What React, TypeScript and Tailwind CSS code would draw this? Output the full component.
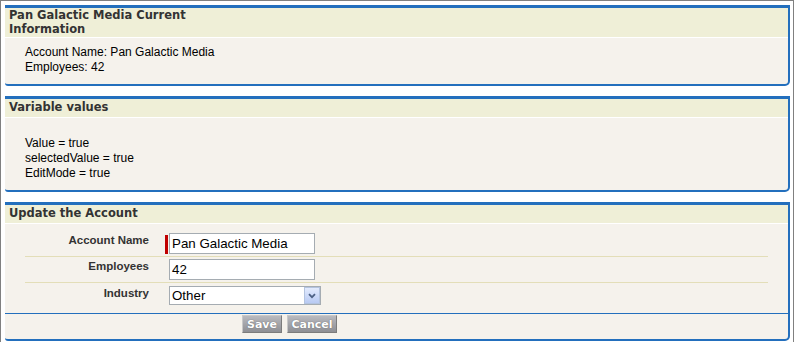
import React from "react";

const verdana = { fontFamily: '"DejaVu Sans", Verdana, sans-serif' };

function PanelHeader({ title, tall }: { title: string; tall?: boolean }) {
  return (
    <div
      className={`bg-[#EFEFD7] border-b border-white flex items-center pl-[4px] ${tall ? "h-[30px]" : "h-[19px]"}`}
    >
      <div
        className="w-[215px] text-[11.5px] font-bold text-[#333333] leading-[13.5px]"
        style={verdana}
      >
        {title}
      </div>
    </div>
  );
}

function Panel({ children }: { children: React.ReactNode }) {
  return (
    <div className="border-t-[3px] border-r-2 border-b-2 border-l-0 border-[#236FBD] rounded-br-[5px] rounded-bl-[3px] bg-[#F5F2EC] overflow-hidden">
      {children}
    </div>
  );
}

function Row({
  label,
  required,
  border,
  children,
  pt = "pt-[2px]",
  pb = "pb-[2px]",
}: {
  label: string;
  required?: boolean;
  border?: boolean;
  children: React.ReactNode;
  pt?: string;
  pb?: string;
}) {
  return (
    <div className={`flex ${pt} ${pb} ${border ? "border-b border-[#E3DEB8]" : ""}`}>
      <div className="w-[137px] pr-[13px] text-right pt-[1px] text-[11.5px] leading-[13px] font-bold text-[#333333]">
        {label}
      </div>
      <div className="flex items-start pl-[3px]">
        <div className={`w-[3px] h-[19px] mt-[2px] ${required ? "bg-[#C00000]" : ""}`} />
        <div className="ml-[1px]">{children}</div>
      </div>
    </div>
  );
}

function TextBox({ value }: { value: string }) {
  return (
    <div className="w-[146px] h-[21px] border border-[#A5ACB2] bg-white pl-[2px] flex items-center text-[13.33px] text-black leading-none">
      {value}
    </div>
  );
}

function SelectBox({ value }: { value: string }) {
  return (
    <div className="w-[152px] h-[19px] border border-[#A5ACB2] bg-white flex items-center text-[13.33px] text-black leading-none">
      <div className="flex-1 pl-[2px]">{value}</div>
      <div className="w-[16px] h-[17px] border border-[#B3C3DF] bg-gradient-to-b from-[#E3EBFD] to-[#B8CAF3] flex items-center justify-center">
        <svg width="8" height="6" viewBox="0 0 8 6">
          <path d="M1 1.2 L4 4.2 L7 1.2" fill="none" stroke="#4D6185" strokeWidth="1.8" />
        </svg>
      </div>
    </div>
  );
}

function Btn({ label, w }: { label: string; w: string }) {
  return (
    <div
      className={`${w} h-[18px] flex items-center justify-center border border-[#C8C8C8] border-r-[#7C7C7C] border-b-[#7C7C7C] bg-gradient-to-b from-[#B9BABF] to-[#8E8F94] text-white text-[11px] font-bold leading-none`}
      style={{ ...verdana, textShadow: "0 0 1px #555" }}
    >
      {label}
    </div>
  );
}

export default function App() {
  return (
    <div
      className="w-[794px] border border-[#808080] bg-white pt-[4px] pb-[1px] pl-[4px] pr-[3px] flex flex-col gap-[10px]"
      style={{ fontFamily: '"Liberation Sans", Arial, sans-serif' }}
    >
      <Panel>
        <PanelHeader title="Pan Galactic Media Current Information" tall />
        <div className="pt-[7px] pb-[9px] pl-[20px] text-[12px] leading-[15px] text-black">
          <div>Account Name: Pan Galactic Media</div>
          <div>Employees: 42</div>
        </div>
      </Panel>

      <Panel>
        <PanelHeader title="Variable values" />
        <div className="pt-[18px] pb-[9px] pl-[20px] text-[12px] leading-[15px] text-black">
          <div>Value = true</div>
          <div>selectedValue = true</div>
          <div>EditMode = true</div>
        </div>
      </Panel>

      <Panel>
        <PanelHeader title="Update the Account" />
        <div className="pt-[7px] pb-[3px] pl-[20px] pr-[20px]">
          <Row label="Account Name" required border>
            <TextBox value="Pan Galactic Media" />
          </Row>
          <Row label="Employees" border>
            <TextBox value="42" />
          </Row>
          <Row label="Industry" pt="pt-[3px]" pb="pb-[3px]">
            <SelectBox value="Other" />
          </Row>
        </div>
        <div className="border-t border-[#236FBD] pt-[1px] pb-[6px] flex">
          <div className="w-[237px]" />
          <div className="flex gap-[5px]">
            <Btn label="Save" w="w-[40px]" />
            <Btn label="Cancel" w="w-[50px]" />
          </div>
        </div>
      </Panel>
    </div>
  );
}
